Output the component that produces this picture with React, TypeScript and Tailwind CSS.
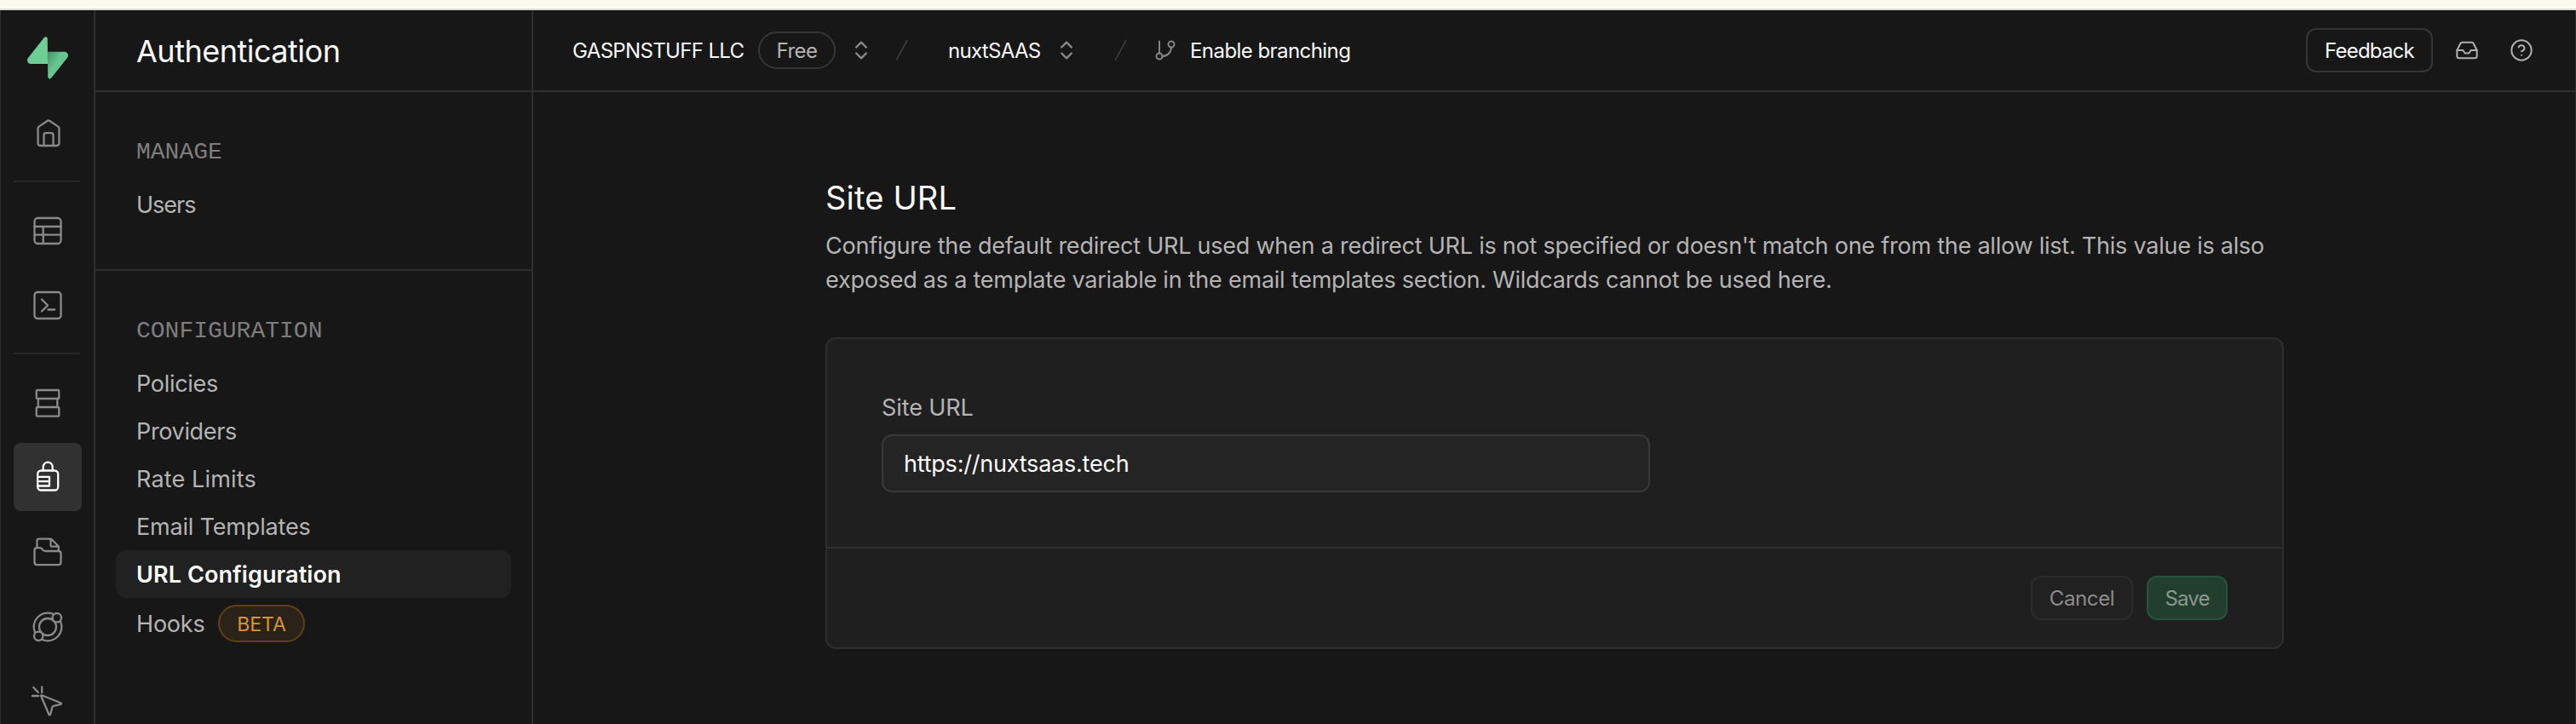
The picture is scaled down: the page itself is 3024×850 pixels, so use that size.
import type { ReactNode } from "react";
import { ChevronsUpDown, CircleHelp, GitBranch, Inbox } from "lucide-react";

function RailIcon({ children, active = false }: { children: ReactNode; active?: boolean }) {
  return (
    <div
      className={
        active
          ? "flex size-20 shrink-0 items-center justify-center rounded-lg bg-[#313131] text-white"
          : "flex size-20 shrink-0 items-center justify-center text-[#8a8a8a]"
      }
    >
      <svg
        width="40"
        height="40"
        viewBox="0 0 40 40"
        fill="none"
        stroke="currentColor"
        strokeWidth="2.3"
        strokeLinecap="round"
        strokeLinejoin="round"
        className="overflow-visible"
      >
        {children}
      </svg>
    </div>
  );
}

function Logo() {
  return (
    <svg width="48" height="50" viewBox="0 0 109 113" fill="none">
      <defs>
        <linearGradient id="bolt" x1="50" y1="42" x2="82" y2="62" gradientUnits="userSpaceOnUse">
          <stop stopColor="#468a62" />
          <stop offset="1" stopColor="#67c68f" />
        </linearGradient>
      </defs>
      <path
        d="M63.7 110.3C60.8 113.9 55 111.9 55 107.3L54 40.1H99.2C107.4 40.1 112 49.5 106.9 55.9L63.7 110.3Z"
        fill="url(#bolt)"
      />
      <path
        d="M45.3 2.1C48.2 -1.5 54 .4 54 5L54.5 72.3H9.8C1.6 72.3 -2.9 62.8 2.2 56.4L45.3 2.1Z"
        fill="#6dcf96"
      />
    </svg>
  );
}

function Slash() {
  return (
    <svg width="32" height="32" viewBox="0 0 24 24" fill="none" stroke="#404040" strokeWidth="1.1" strokeLinecap="round">
      <path d="M16.3 3.5L7 20.6" />
    </svg>
  );
}

function Rail() {
  return (
    <nav className="flex w-28 shrink-0 flex-col items-start overflow-hidden border-l border-r-2 border-l-[#2e2e2e] border-r-[#2e2e2e] pl-[15px]">
      <div className="mt-[31px] ml-4 h-[50px] shrink-0">
        <Logo />
      </div>
      <div className="mt-[23px] flex flex-col">
        <RailIcon>
          <path d="M8.6 14.6c0-.9.4-1.5 1.1-2L19.5 6c.9-.6 2-.6 2.9 0l9.9 6.6c.7.5 1.1 1.1 1.1 2V32c0 1.8-1.2 3-3 3H11.6c-1.8 0-3-1.2-3-3Z" />
          <path d="M15.5 35V22.5c0-1.5.8-2.3 2.300-2.300h6.400c1.500 0 2.300.8 2.300 2.300V35" />
        </RailIcon>
        <div className="my-4 h-0.5 w-[78px] bg-[#262626]" />
        <RailIcon>
          <rect x="4.5" y="6" width="31" height="30" rx="4" />
          <path d="M4.5 16h31M4.5 25.7h31M14.7 16v20" />
        </RailIcon>
        <div className="h-2" />
        <RailIcon>
          <rect x="4.5" y="5" width="31" height="31" rx="3.5" />
          <path d="M13 13.5l7 7-7 7M20.5 25.5h7.8" />
        </RailIcon>
        <div className="my-4 h-0.5 w-[78px] bg-[#262626]" />
        <RailIcon>
          <rect x="6.8" y="6" width="26.5" height="10" rx="1.5" />
          <path d="M8.8 16v10M31.3 16v10" />
          <rect x="6.8" y="26" width="26.5" height="10.7" rx="1.5" />
        </RailIcon>
        <div className="h-2" />
        <RailIcon active>
          <rect x="8.2" y="12.5" width="24" height="23" rx="4" />
          <path d="M14.7 12.5V8.2a5.5 5.5 0 0 1 11 0v4.3M8.2 19.8H22v10.7H8.2M8.2 25.1H22" />
        </RailIcon>
        <div className="h-2" />
        <RailIcon>
          <path d="M7.5 15V6.7c0-1.2.8-2 2-2h14.7l8.6 8.8V19M23.5 5v6.7c0 1.2.8 2 2 2h7" />
          <path d="M4.5 18.2c0-1.8 1.2-3 3-3h3.3c.8 0 1.4.3 2 .8l2.2 2.2c.5.5 1.2.8 2 .8h16c1.5 0 2.5 1 2.500 2.500V32c0 1.800-1.200 3.200-3 3.200h-25c-1.800 0-3-1.400-3-3.200Z" />
        </RailIcon>
        <div className="h-2" />
        <RailIcon>
          <circle cx="20" cy="20" r="16.3" />
          <circle cx="20" cy="20" r="10" />
          <circle cx="30.8" cy="9.2" r="5.2" fill="#171717" />
          <circle cx="9.2" cy="30.8" r="5.2" fill="#171717" />
        </RailIcon>
        <div className="h-2" />
        <RailIcon>
          <path d="M13 12.300l22.300 9c.9.400.8 1.300-.1 1.500l-8.300 2c-.8.200-1.200.600-1.500 1.400l-2.300 8.800c-.3.900-1.300.9-1.600 0L12.200 13c-.2-.6.300-.9.800-.7Z" />
          <path d="M13.2 2.5v6.7M3.3 3l5.4 5.8M2 13h7.2" />
        </RailIcon>
      </div>
    </nav>
  );
}

function NavItem({ label, spacing }: { label: string; spacing: string }) {
  return (
    <a className={"flex h-14 items-center rounded-xl px-6 pt-0.5 text-[27px] text-[#b4b4b4] " + spacing}>{label}</a>
  );
}

function SectionTitle({ children }: { children: ReactNode }) {
  return (
    <h2 className="mb-[15px] pl-6 font-['Liberation_Mono',monospace] text-[28px] leading-9 text-[#7e7e7e]">
      {children}
    </h2>
  );
}

function Sidebar() {
  return (
    <aside className="flex w-[514px] shrink-0 flex-col border-r-2 border-[#2e2e2e]">
      <div className="flex h-24 shrink-0 items-center border-b-2 border-[#2e2e2e] pt-0.5 pl-12">
        <h1 className="text-[36px] leading-none tracking-[-0.5px] text-[#fafafa]">Authentication</h1>
      </div>
      <section className="flex flex-col border-b-2 border-[#2e2e2e] px-6 pt-[53px] pb-12">
        <SectionTitle>MANAGE</SectionTitle>
        <NavItem label="Users" spacing="tracking-[-1px]" />
      </section>
      <section className="flex flex-col px-6 pt-[53px]">
        <SectionTitle>CONFIGURATION</SectionTitle>
        <NavItem label="Policies" spacing="tracking-[-0.3px]" />
        <NavItem label="Providers" spacing="tracking-[-0.35px]" />
        <NavItem label="Rate Limits" spacing="tracking-[0.16px]" />
        <NavItem label="Email Templates" spacing="tracking-[-0.18px]" />
        <a className="flex h-14 items-center rounded-xl bg-[#212121] pt-0.5 pl-6 text-[27px] font-semibold tracking-[0.09px] text-[#fafafa]">
          URL Configuration
        </a>
        <a className="flex h-[60px] items-center pl-6 text-[27px] tracking-[-0.19px] text-[#b4b4b4]">
          <span className="w-24 pt-0.5">Hooks</span>
          <span className="flex h-11 w-[102px] items-center justify-center rounded-full border-2 border-[#63400f] bg-[#2b2319] pt-0.5 text-[23px] tracking-normal text-[#db9430]">
            BETA
          </span>
        </a>
      </section>
    </aside>
  );
}

function TopBar() {
  return (
    <header className="flex h-24 shrink-0 items-center border-b-2 border-[#2e2e2e] pl-[46px] text-[24px] text-[#fafafa]">
      <span className="w-[218px] pt-0.5 whitespace-nowrap tracking-[-0.65px]">GASPNSTUFF LLC</span>
      <span className="flex h-11 w-[91px] items-center justify-center rounded-full border-2 border-[#363636] pt-0.5 tracking-[-0.46px] text-[#b4b4b4]">
        Free
      </span>
      <ChevronsUpDown size={28} strokeWidth={2} className="ml-4 text-[#8a8a8a]" />
      <span className="ml-[18px]">
        <Slash />
      </span>
      <span className="ml-[38px] w-[125px] pt-0.5 whitespace-nowrap tracking-[-0.7px]">nuxtSAAS</span>
      <ChevronsUpDown size={28} strokeWidth={2} className="text-[#8a8a8a]" />
      <span className="ml-[34px]">
        <Slash />
      </span>
      <GitBranch size={28} strokeWidth={1.7} className="ml-[22px] text-[#868686]" />
      <span className="ml-[15px] pt-0.5 whitespace-nowrap tracking-[-0.56px]">Enable branching</span>
      <div className="mr-[49px] ml-auto flex items-center">
        <button className="flex h-[52px] w-[149px] items-center justify-center rounded-xl border-2 border-[#363636] pt-0.5 tracking-[-0.8px]">
          Feedback
        </button>
        <Inbox size={28} strokeWidth={1.7} className="ml-[26px] text-[#b0b0b0]" />
        <CircleHelp size={28} strokeWidth={1.7} className="ml-9 text-[#b0b0b0]" />
      </div>
    </header>
  );
}

function SiteUrlForm() {
  return (
    <form className="mt-[47px] flex w-[1712px] flex-col rounded-xl border-2 border-[#2e2e2e] bg-[#1f1f1f]">
      <div className="flex flex-col px-16 pt-[63px] pb-16">
        <label className="text-[27px] leading-9 tracking-[-0.1px] text-[#b4b4b4]">Site URL</label>
        <div className="mt-[13px] flex h-[68px] w-[902px] items-center rounded-xl border-2 border-[#393939] bg-[#242424] pt-0.5 pl-6 text-[27px] tracking-[-0.22px] text-[#fafafa]">
          https://nuxtsaas.tech
        </div>
      </div>
      <div className="flex h-[118px] items-center justify-end gap-4 border-t-2 border-[#2e2e2e] px-16 text-[24px]">
        <button
          type="button"
          className="flex h-[52px] w-[120px] items-center justify-center rounded-xl border-2 border-[#2b2b2b] bg-[#212121] pt-0.5 tracking-[-0.38px] text-[#8c8c8c]"
        >
          Cancel
        </button>
        <button
          type="button"
          className="flex h-[52px] w-[95px] items-center justify-center rounded-xl border-2 border-[#285239] bg-[#223f2e] pt-0.5 tracking-[-0.85px] text-[#8f958f]"
        >
          Save
        </button>
      </div>
    </form>
  );
}

export default function App() {
  return (
    <div className="flex h-[850px] w-[3024px] flex-col overflow-hidden bg-[#171717] font-['Inter',sans-serif] font-normal">
      <div className="h-3 shrink-0 border-b-2 border-[#dfe2d2] bg-[#fafbee]" />
      <div className="flex min-h-0 flex-1">
        <Rail />
        <Sidebar />
        <div className="flex min-w-0 flex-1 flex-col border-r border-[#2e2e2e]">
          <TopBar />
          <main className="flex flex-col pt-[100px] pl-[343px]">
            <h2 className="text-[38px] leading-[48px] tracking-[0.18px] text-[#fafafa]">Site URL</h2>
            <p className="mt-[13px] text-[27px] leading-10 tracking-[-0.23px] whitespace-nowrap text-[#b4b4b4]">
              Configure the default redirect URL used when a redirect URL is not specified or doesn't match one from the
              allow list. This value is also
              <br />
              exposed as a template variable in the email templates section. Wildcards cannot be used here.
            </p>
            <SiteUrlForm />
          </main>
        </div>
      </div>
    </div>
  );
}
